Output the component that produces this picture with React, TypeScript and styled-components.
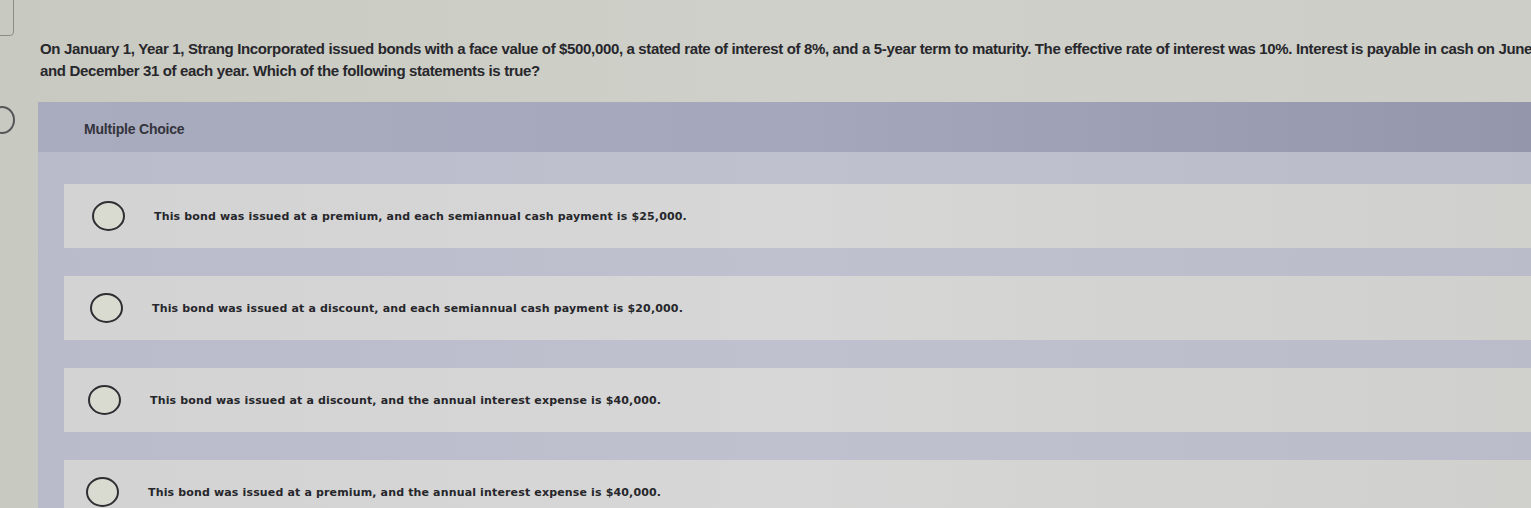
import React from 'react';
import styled, { createGlobalStyle } from 'styled-components';

const GlobalStyle = createGlobalStyle`
  html, body {
    margin: 0;
    padding: 0;
    overflow: hidden;
  }
  body {
    background: #cbccc4;
    font-family: "Liberation Sans", Arial, sans-serif;
  }
`;

const Page = styled.div`
  width: 1531px;
  height: 508px;
  overflow: hidden;
  display: grid;
  grid-template-columns: 38px 1fr;
  background: linear-gradient(90deg, #c8c9c0 0%, #cfd0c9 50%, #cdcec7 100%);
`;

const Gutter = styled.div`
  display: flex;
  flex-direction: column;
  gap: 70px;
`;

const NumberBox = styled.div`
  width: 22px;
  height: 40px;
  margin-left: -10px;
  margin-top: -6px;
  border: 1.5px solid #8c8d88;
  border-radius: 4px;
`;

const NavDot = styled.div`
  width: 22px;
  height: 24px;
  margin-left: -11px;
  border: 2px solid #55565a;
  border-radius: 50%;
`;

const Main = styled.div`
  display: flex;
  flex-direction: column;
  min-width: 0;
`;

const Question = styled.p`
  margin: 38px 0 0 2px;
  width: 1560px;
  font-size: 15px;
  line-height: 22px;
  font-weight: 700;
  letter-spacing: -0.35px;
  color: #27272c;
  white-space: nowrap;
`;

const Panel = styled.section`
  margin-top: 20px;
  display: flex;
  flex-direction: column;
  background: linear-gradient(90deg, #b9bbcb 0%, #c0c1ce 50%, #bbbcc9 100%);
  padding-bottom: 24px;
`;

const PanelHeader = styled.div`
  height: 50px;
  display: flex;
  align-items: center;
  padding-left: 46px;
  padding-top: 4px;
  box-sizing: border-box;
  font-size: 14px;
  font-weight: 700;
  color: #34343c;
  letter-spacing: -0.2px;
  background: linear-gradient(90deg, #a9abbe 0%, #a5a7bc 50%, #9497ac 100%);
`;

const Options = styled.div`
  display: flex;
  flex-direction: column;
  gap: 28px;
  padding: 32px 0 0 26px;
`;

const Option = styled.label<{ $shift: number }>`
  height: 64px;
  display: flex;
  align-items: center;
  padding-left: ${({ $shift }) => 28 - $shift}px;
  background: linear-gradient(90deg, #d2d3d2 0%, #d6d7d6 50%, #d0d1cd 100%);
  cursor: pointer;
`;

const Radio = styled.span`
  flex: none;
  width: 29px;
  height: 26px;
  border: 2px solid #2e2e33;
  border-radius: 50%;
  background: #d9dad0;
`;

const OptionText = styled.span`
  margin-left: 29px;
  font-family: "DejaVu Sans", Verdana, sans-serif;
  font-size: 11px;
  font-weight: 700;
  letter-spacing: 0.15px;
  color: #26262b;
`;

const options = [
  'This bond was issued at a premium, and each semiannual cash payment is $25,000.',
  'This bond was issued at a discount, and each semiannual cash payment is $20,000.',
  'This bond was issued at a discount, and the annual interest expense is $40,000.',
  'This bond was issued at a premium, and the annual interest expense is $40,000.',
];

const App: React.FC = () => {
  return (
    <>
      <GlobalStyle />
      <Page>
        <Gutter>
          <NumberBox />
          <NavDot />
        </Gutter>
        <Main>
          <Question>
            On January 1, Year 1, Strang Incorporated issued bonds with a face value of $500,000, a stated rate of
            interest of 8%, and a 5-year term to maturity. The effective rate of interest was 10%. Interest is payable
            in cash on June 30
            <br />
            and December 31 of each year. Which of the following statements is true?
          </Question>
          <Panel>
            <PanelHeader>Multiple Choice</PanelHeader>
            <Options>
              {options.map((text, i) => (
                <Option key={i} $shift={i * 2}>
                  <Radio />
                  <OptionText>{text}</OptionText>
                </Option>
              ))}
            </Options>
          </Panel>
        </Main>
      </Page>
    </>
  );
};

export default App;
